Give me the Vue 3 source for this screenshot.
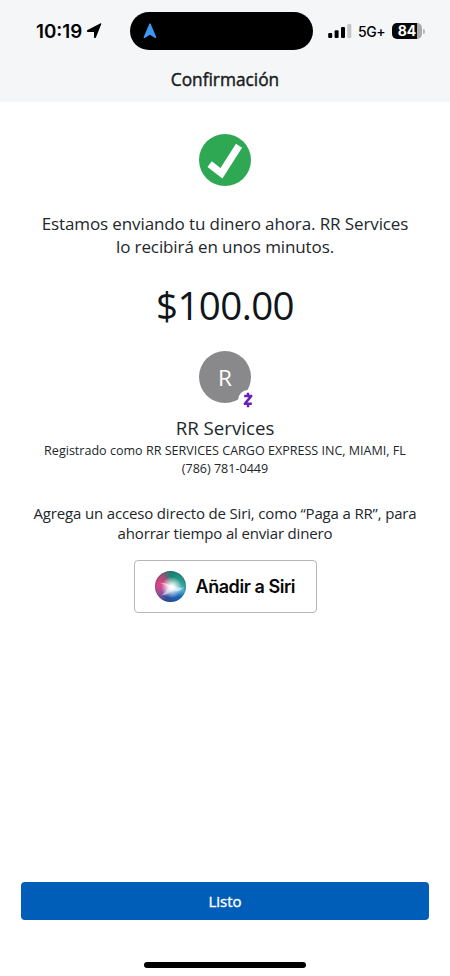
<script setup>
const message = ['Estamos enviando tu dinero ahora. RR Services', 'lo recibirá en unos minutos.']
const hint = ['Agrega un acceso directo de Siri, como “Paga a RR”, para', 'ahorrar tiempo al enviar dinero']
</script>

<template>
  <div class="screen">
    <header class="top">
      <div class="status">
        <span class="time">10:19</span>
        <svg class="location" viewBox="0 0 16 16"><path d="M15.2 1.2 9.9 14.5c-.4.9-1.9.7-1.9-.4V9H1.9C.7 9 .5 7.6 1.5 7.1L14.2.4c.7-.4 1.3.1 1 .8Z" /></svg>
        <div class="island">
          <svg viewBox="0 0 14 16"><path d="M6.2.9c.3-.8 1.2-.8 1.5 0l5.5 13.2c.3.8-.3 1.2-1 .9L7 11.8 1.7 15c-.7.4-1.3-.1-1-.9Z" /></svg>
        </div>
        <svg class="signal" viewBox="0 0 24 16">
          <rect x="0.2" y="10" width="4" height="5" rx="1.1" />
          <rect x="6.6" y="7.2" width="4" height="7.8" rx="1.1" />
          <rect x="13" y="4" width="4" height="11" rx="1.1" />
          <rect class="weak" x="19.3" y="1" width="4" height="14" rx="1.1" />
        </svg>
        <span class="network">5G+</span>
        <div class="battery"><span>84</span></div>
        <i class="cap"></i>
      </div>
      <h1>Confirmación</h1>
    </header>

    <main>
      <svg class="check" viewBox="0 0 52 52">
        <circle cx="26" cy="26" r="26" />
        <path d="M10.6 30.2 22.5 39.3 40 11.8" />
      </svg>
      <div class="message"><p v-for="line in message" :key="line">{{ line }}</p></div>
      <div class="amount">$100.00</div>
      <div class="avatar">
        <span>R</span>
        <div class="badge">
          <svg viewBox="0 0 10 16"><path d="M5 .8v2.7M5 12.5v2.7M1.2 4.1h7L1.8 11.8h7" /></svg>
        </div>
      </div>
      <h2>RR Services</h2>
      <p class="registered">Registrado como RR SERVICES CARGO EXPRESS INC, MIAMI, FL</p>
      <p class="phone">(786) 781-0449</p>
      <div class="hint"><p v-for="line in hint" :key="line">{{ line }}</p></div>
      <button class="siri">
        <span class="orb">
          <svg viewBox="0 0 32 32"><path d="M5 12Q14 12 17 16Q23 18 30 17Q23 23 18 20Q14 24 7 25Q12 20 14 17Q10 14 5 12Z" /></svg>
        </span>
        <span class="siri-label">Añadir a Siri</span>
      </button>
    </main>

    <footer>
      <button class="done"><span>Listo</span></button>
      <div class="home"></div>
    </footer>
  </div>
</template>

<style>
body { margin: 0; background: #fff; }
</style>

<style scoped>
* { box-sizing: border-box; }
p, h1, h2 { margin: 0; font-weight: 400; white-space: nowrap; }
button { padding: 0; font: inherit; }
.screen { width: 450px; height: 976px; display: flex; flex-direction: column; background: #fff; color: #22272b; font-family: "Open Sans", sans-serif; overflow: hidden; }
.top { height: 102px; flex: none; background: #f5f6f8; }
.status { height: 62px; display: flex; align-items: center; padding-left: 36px; color: #000; font-family: Inter, sans-serif; }
.time { width: 47px; font-size: 18.8px; font-weight: 600; letter-spacing: 0; white-space: nowrap; }
.location { width: 16px; height: 16px; margin-left: 3px; }
.island { width: 183px; height: 38px; margin-left: 28px; border-radius: 19px; background: #000; display: flex; align-items: center; padding-left: 13px; }
.island svg { width: 14px; height: 16px; fill: #3c98f2; }
.signal { width: 24px; height: 16px; margin-left: 15px; }
.weak { fill: #c4c5c7; }
.network { width: 27px; margin-left: 6px; font-size: 14px; font-weight: 500; letter-spacing: -.4px; white-space: nowrap; }
.battery { width: 30px; height: 16px; margin-left: 7px; border-radius: 5px; background: linear-gradient(90deg, #080808 25px, #a9aaab 25px); color: #fff; display: flex; justify-content: center; align-items: center; font-size: 14px; font-weight: 700; }
.battery span { position: relative; top: -.5px; }
.cap { width: 2px; height: 5px; margin-left: 1px; border-radius: 0 2px 2px 0; background: #b5b6b8; }
h1 { margin-top: 5px; text-align: center; font-size: 17.3px; line-height: 25px; -webkit-text-stroke: .45px currentColor; color: #191d21; }
main { display: flex; flex-direction: column; align-items: center; text-align: center; }
.check { width: 52px; height: 52px; margin-top: 32px; fill: #2ea853; }
.check path { fill: none; stroke: #fff; stroke-width: 7.2; stroke-linejoin: miter; }
.message { margin-top: 26px; font-size: 17px; line-height: 23px; letter-spacing: -.11px; }
.amount { margin-top: 22px; font-size: 38.5px; line-height: 50px; letter-spacing: -.6px; color: #10151a; }
.avatar { position: relative; width: 52px; height: 52px; margin-top: 21px; border-radius: 50%; background: #89898b; color: #fff; font-size: 22.5px; line-height: 53px; }
.badge { position: absolute; left: 39px; top: 39px; width: 20px; height: 20px; border-radius: 50%; background: #fff; display: flex; align-items: center; justify-content: center; }
.badge svg { width: 10px; height: 16px; fill: none; stroke: #6720b8; stroke-width: 2.5; stroke-linejoin: round; }
h2 { margin-top: 12px; font-size: 18.7px; line-height: 26px; }
.registered, .phone { font-size: 12.55px; line-height: 18px; }
.registered { margin-top: 1px; }
.hint { margin-top: 25px; font-size: 15px; line-height: 20px; letter-spacing: -.16px; }
.siri { width: 183px; height: 53px; margin-top: 17px; border: 1px solid #b7b7b7; border-radius: 4px; background: #fff; color: #080808; display: flex; align-items: center; padding-left: 20px; }
.orb { width: 31px; height: 31px; border-radius: 50%; flex: none; overflow: hidden; background: radial-gradient(circle at 54% 53%, #fff 0 7%, #ffffffb0 20%, transparent 46%), radial-gradient(circle, transparent 62%, #292b4f70 72%), conic-gradient(from 0deg at 52% 52%, #168472, #299f91 70deg, #4bb4cf 105deg, #1468bd 140deg, #244e9b 200deg, #8d529f 235deg, #df4586 280deg, #b94779 315deg, #168472 360deg); }
.orb svg { display: block; width: 31px; height: 31px; fill: #f2faff; opacity: .5; }
.siri-label { margin-left: 10px; font: 600 18px/24px Inter, sans-serif; letter-spacing: -.45px; white-space: nowrap; }
footer { margin-top: auto; display: flex; flex-direction: column; align-items: center; padding-bottom: 8px; }
.done { width: 408px; height: 38px; border: 0; border-radius: 4px; background: #005eb8; color: #fff; font-size: 15px; line-height: 37px; -webkit-text-stroke: .35px currentColor; }
.home { width: 162px; height: 6px; margin-top: 42px; border-radius: 3px; background: #000; }
</style>
